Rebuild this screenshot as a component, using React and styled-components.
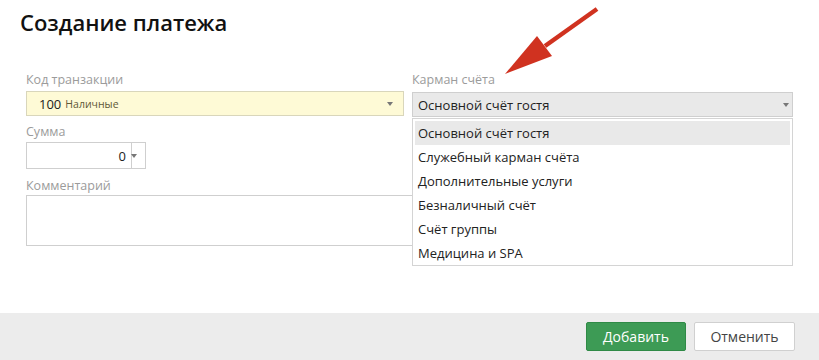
import React from 'react'
import styled, { createGlobalStyle } from 'styled-components'

const GlobalStyle = createGlobalStyle`
    html, body {
        margin:0;
        padding:0;
        background:#fff;
    }
    body {
        font-family:"Open Sans", "Noto Sans", sans-serif;
        color:#222;
    }
`

const Page = styled.div`
    width:819px;
    height:360px;
    position:relative;
    display:flex;
    flex-direction:column;
    overflow:hidden;
`

const Title = styled.h1`
    margin:0;
    padding:8px 0 0 20px;
    height:40px;
    font-size:22px;
    font-weight:600;
    color:#111;
    line-height:28px;
`

const Form = styled.div`
    display:grid;
    grid-template-columns:378px 381px;
    column-gap:8px;
    padding:24px 0 0 26px;
    flex:1;
`

const Column = styled.div`
    display:flex;
    flex-direction:column;
    position:relative;
`

const Label = styled.div`
    font-size:12.5px;
    color:#9b9b9b;
    line-height:16px;
    height:${p => p.$h || 19}px;
`

const Select = styled.div`
    box-sizing:border-box;
    height:25px;
    display:flex;
    align-items:center;
    padding:0 0 0 ${p => p.$pad || 5}px;
    background:${p => p.$bg};
    border:1px solid ${p => p.$border || '#cfcfcf'};
    font-size:13px;
    color:#222;
    position:relative;
`

const Code = styled.span`
    font-size:13px;
    margin-right:4px;
`

const CodeName = styled.span`
    font-size:10.5px;
    color:#5e5838;
`

const Caret = styled.span`
    margin-left:auto;
    width:0;
    height:0;
    border-left:3px solid transparent;
    border-right:3px solid transparent;
    border-top:4px solid #777;
    margin-right:${p => p.$mr || 10}px;
`

const Gap = styled.div`
    height:${p => p.$h}px;
`

const NumberBox = styled.div`
    box-sizing:border-box;
    width:120px;
    height:27px;
    display:flex;
    border:1px solid #cfcfcf;
    background:#fff;
`

const NumberValue = styled.div`
    flex:1;
    display:flex;
    align-items:center;
    justify-content:flex-end;
    padding-right:5px;
    font-size:13px;
    border-right:1px solid #cfcfcf;
`

const Spin = styled.div`
    width:13px;
    display:flex;
    align-items:center;
    justify-content:center;
`

const TextArea = styled.div`
    box-sizing:border-box;
    width:400px;
    height:51px;
    border:1px solid #cfcfcf;
    background:#fff;
`

const Menu = styled.div`
    position:absolute;
    top:46px;
    left:0;
    width:381px;
    box-sizing:border-box;
    background:#fff;
    border:1px solid #d4d4d4;
    padding:2px 2px 0 2px;
    z-index:2;
`

const MenuItem = styled.div`
    height:24px;
    line-height:24px;
    padding-left:3px;
    font-size:13px;
    color:#222;
    background:${p => p.$active ? '#e9e9e9' : 'transparent'};
`

const Footer = styled.div`
    height:47px;
    background:#ececec;
    display:flex;
    justify-content:flex-end;
    align-items:center;
    gap:8px;
    padding-right:24px;
`

const Button = styled.button`
    box-sizing:border-box;
    width:${p => p.$w}px;
    height:29px;
    border-radius:2px;
    font-family:inherit;
    font-size:14px;
    cursor:pointer;
    border:1px solid ${p => p.$primary ? '#2f8a46' : '#d0d0d0'};
    background:${p => p.$primary ? '#3d9b55' : '#fff'};
    color:${p => p.$primary ? '#fff' : '#444'};
`

const Pointer = styled.svg`
    position:absolute;
    left:500px;
    top:4px;
    z-index:3;
`

const pockets = [
  'Основной счёт гостя',
  'Служебный карман счёта',
  'Дополнительные услуги',
  'Безналичный счёт',
  'Счёт группы',
  'Медицина и SPA',
]

const App = () => {
  return (
    <Page>
      <GlobalStyle />
      <Title>Создание платежа</Title>
      <Form>
        <Column>
          <Label>Код транзакции</Label>
          <Select $bg="#fefad6" $border="#d9d6bb" $pad={12}>
            <Code>100</Code>
            <CodeName>Наличные</CodeName>
            <Caret />
          </Select>
          <Gap $h={8} />
          <Label $h={18}>Сумма</Label>
          <NumberBox>
            <NumberValue>0</NumberValue>
            <Spin><Caret $mr={0} style={{ marginLeft: 0 }} /></Spin>
          </NumberBox>
          <Gap $h={9} />
          <Label $h={17}>Комментарий</Label>
          <TextArea />
        </Column>
        <Column>
          <Label $h={20}>Карман счёта</Label>
          <Select $bg="#e9e9e9">
            Основной счёт гостя
            <Caret $mr={3} />
          </Select>
          <Menu>
            {pockets.map((p, i) => (
              <MenuItem key={p} $active={i === 0}>{p}</MenuItem>
            ))}
          </Menu>
        </Column>
      </Form>
      <Footer>
        <Button $primary $w={100}>Добавить</Button>
        <Button $w={101}>Отменить</Button>
      </Footer>
      <Pointer width="110" height="80" viewBox="0 0 110 80">
        <line x1="97" y1="5" x2="45" y2="42" stroke="#d03220" strokeWidth="4.5" />
        <polygon points="5,70 37,32 52,52" fill="#d03220" />
      </Pointer>
    </Page>
  )
}

export default App
